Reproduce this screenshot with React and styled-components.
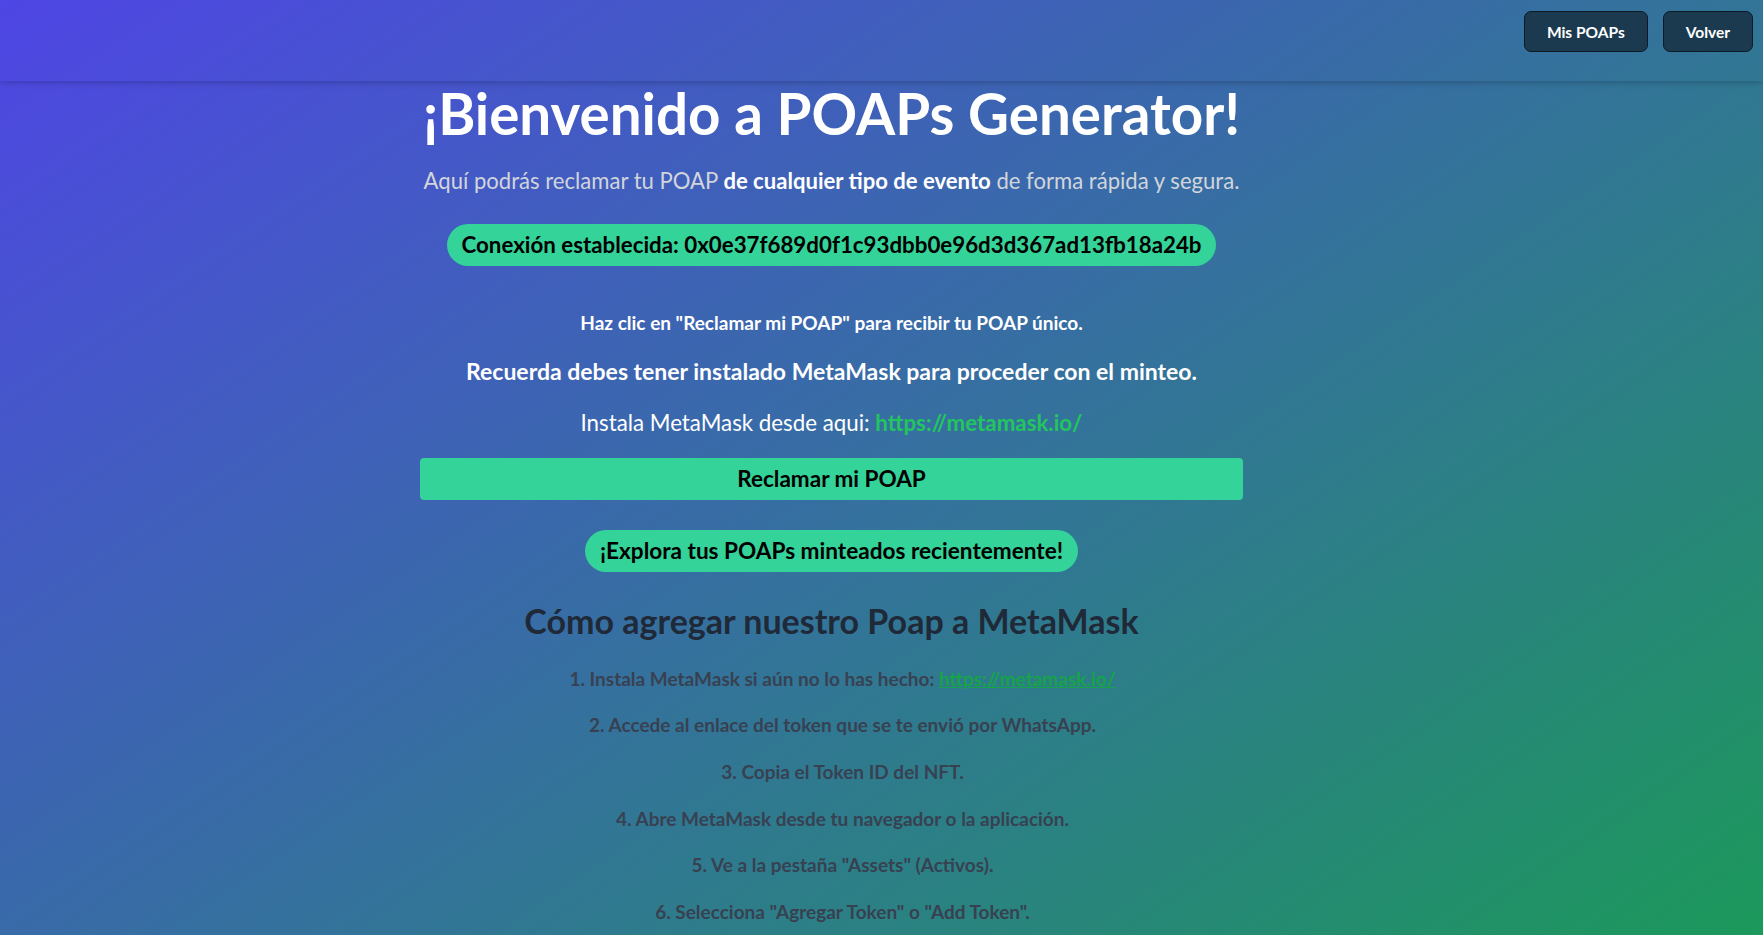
import React from 'react';
import styled, { createGlobalStyle } from 'styled-components';

const GlobalStyle = createGlobalStyle`
  html {
    scrollbar-width: none;
  }
  html::-webkit-scrollbar {
    display: none;
  }
  body {
    margin: 0;
    font-family: "Lato", "Open Sans", sans-serif;
  }
  * {
    box-sizing: border-box;
  }
`;

const Page = styled.div`
  min-height: 1200px;
  background: linear-gradient(to bottom right, #4f46e5, #16a34a);
  color: #ffffff;
`;

const Header = styled.header`
  height: 81px;
  display: flex;
  justify-content: flex-end;
  align-items: flex-start;
  gap: 15px;
  padding: 11px 10px 0 0;
  box-shadow: 0 4px 6px -1px rgba(0, 0, 0, 0.12), 0 2px 4px -1px rgba(0, 0, 0, 0.08);
`;

const NavButton = styled.button`
  height: 41px;
  padding: 0 22px;
  background: #1c3a4f;
  border: 1px solid #0c1a26;
  border-radius: 7px;
  color: #ffffff;
  font-family: "Lato", sans-serif;
  font-size: 15.5px;
  font-weight: 700;
  cursor: pointer;
`;

const Main = styled.main`
  padding: 0 100px 60px 0;
`;

const Column = styled.div`
  width: 823px;
  margin: 0 auto;
  display: flex;
  flex-direction: column;
  align-items: center;
  text-align: center;
`;

const Title = styled.h1`
  margin: 4px 0 0;
  font-size: 56.5px;
  line-height: 1;
  font-weight: 700;
  white-space: nowrap;
  color: #ffffff;
`;

const Subtitle = styled.p`
  margin: 24px 0 0;
  font-size: 22.1px;
  line-height: 30px;
  color: #d1d5db;

  strong {
    color: #ffffff;
    font-weight: 700;
  }
`;

const Pill = styled.div`
  margin-top: ${(p) => p.$top}px;
  padding: 6px 14.5px;
  background: #34d399;
  border-radius: 9999px;
  color: #000000;
  font-size: ${(p) => p.$size}px;
  line-height: 30px;
  font-weight: 700;
  white-space: nowrap;
`;

const Note = styled.p`
  margin: ${(p) => p.$top}px 0 0;
  font-size: ${(p) => p.$size}px;
  line-height: ${(p) => p.$lh}px;
  font-weight: ${(p) => (p.$bold ? 700 : 400)};
  color: #ffffff;
`;

const GreenLink = styled.a`
  color: #22c55e;
  font-weight: 700;
  text-decoration: none;
`;

const ClaimButton = styled.button`
  margin-top: 20px;
  width: 100%;
  height: 42px;
  background: #34d399;
  border: none;
  border-radius: 4px;
  color: #000000;
  font-family: "Lato", sans-serif;
  font-size: 22.5px;
  font-weight: 700;
  cursor: pointer;
`;

const GuideTitle = styled.h2`
  margin: 29px 0 0;
  font-size: 34px;
  line-height: 40px;
  font-weight: 700;
  color: #1f2937;
`;

const Steps = styled.div`
  margin-top: 25px;
  padding-left: 22px;
  display: flex;
  flex-direction: column;
  gap: 20.7px;
`;

const Step = styled.p`
  margin: 0;
  font-size: 19px;
  line-height: 26px;
  font-weight: 700;
  color: #374151;

  a {
    color: #16a34a;
  }
`;

const steps = [
  '2. Accede al enlace del token que se te envió por WhatsApp.',
  '3. Copia el Token ID del NFT.',
  '4. Abre MetaMask desde tu navegador o la aplicación.',
  '5. Ve a la pestaña "Assets" (Activos).',
  '6. Selecciona "Agregar Token" o "Add Token".',
  '7. Pega la dirección del contrato y el Token ID.',
  '8. Confirma y verás tu POAP en MetaMask.',
];

export default function App() {
  return (
    <Page>
      <GlobalStyle />
      <Header>
        <NavButton>Mis POAPs</NavButton>
        <NavButton>Volver</NavButton>
      </Header>
      <Main>
        <Column>
          <Title>¡Bienvenido a POAPs Generator!</Title>
          <Subtitle>
            Aquí podrás reclamar tu POAP <strong>de cualquier tipo de evento</strong> de forma rápida y segura.
          </Subtitle>
          <Pill $top={28} $size={22.3}>
            Conexión establecida: 0x0e37f689d0f1c93dbb0e96d3d367ad13fb18a24b
          </Pill>
          <Note $top={45} $size={19} $lh={24} $bold>
            Haz clic en "Reclamar mi POAP" para recibir tu POAP único.
          </Note>
          <Note $top={21} $size={23} $lh={30} $bold>
            Recuerda debes tener instalado MetaMask para proceder con el minteo.
          </Note>
          <Note $top={22} $size={22.3} $lh={30}>
            Instala MetaMask desde aqui: <GreenLink href="#">https://metamask.io/</GreenLink>
          </Note>
          <ClaimButton>Reclamar mi POAP</ClaimButton>
          <Pill $top={30} $size={22.6}>¡Explora tus POAPs minteados recientemente!</Pill>
          <GuideTitle>Cómo agregar nuestro Poap a MetaMask</GuideTitle>
          <Steps>
            <Step>
              1. Instala MetaMask si aún no lo has hecho: <a href="#">https://metamask.io/</a>
            </Step>
            {steps.map((s) => (
              <Step key={s}>{s}</Step>
            ))}
          </Steps>
        </Column>
      </Main>
    </Page>
  );
}
